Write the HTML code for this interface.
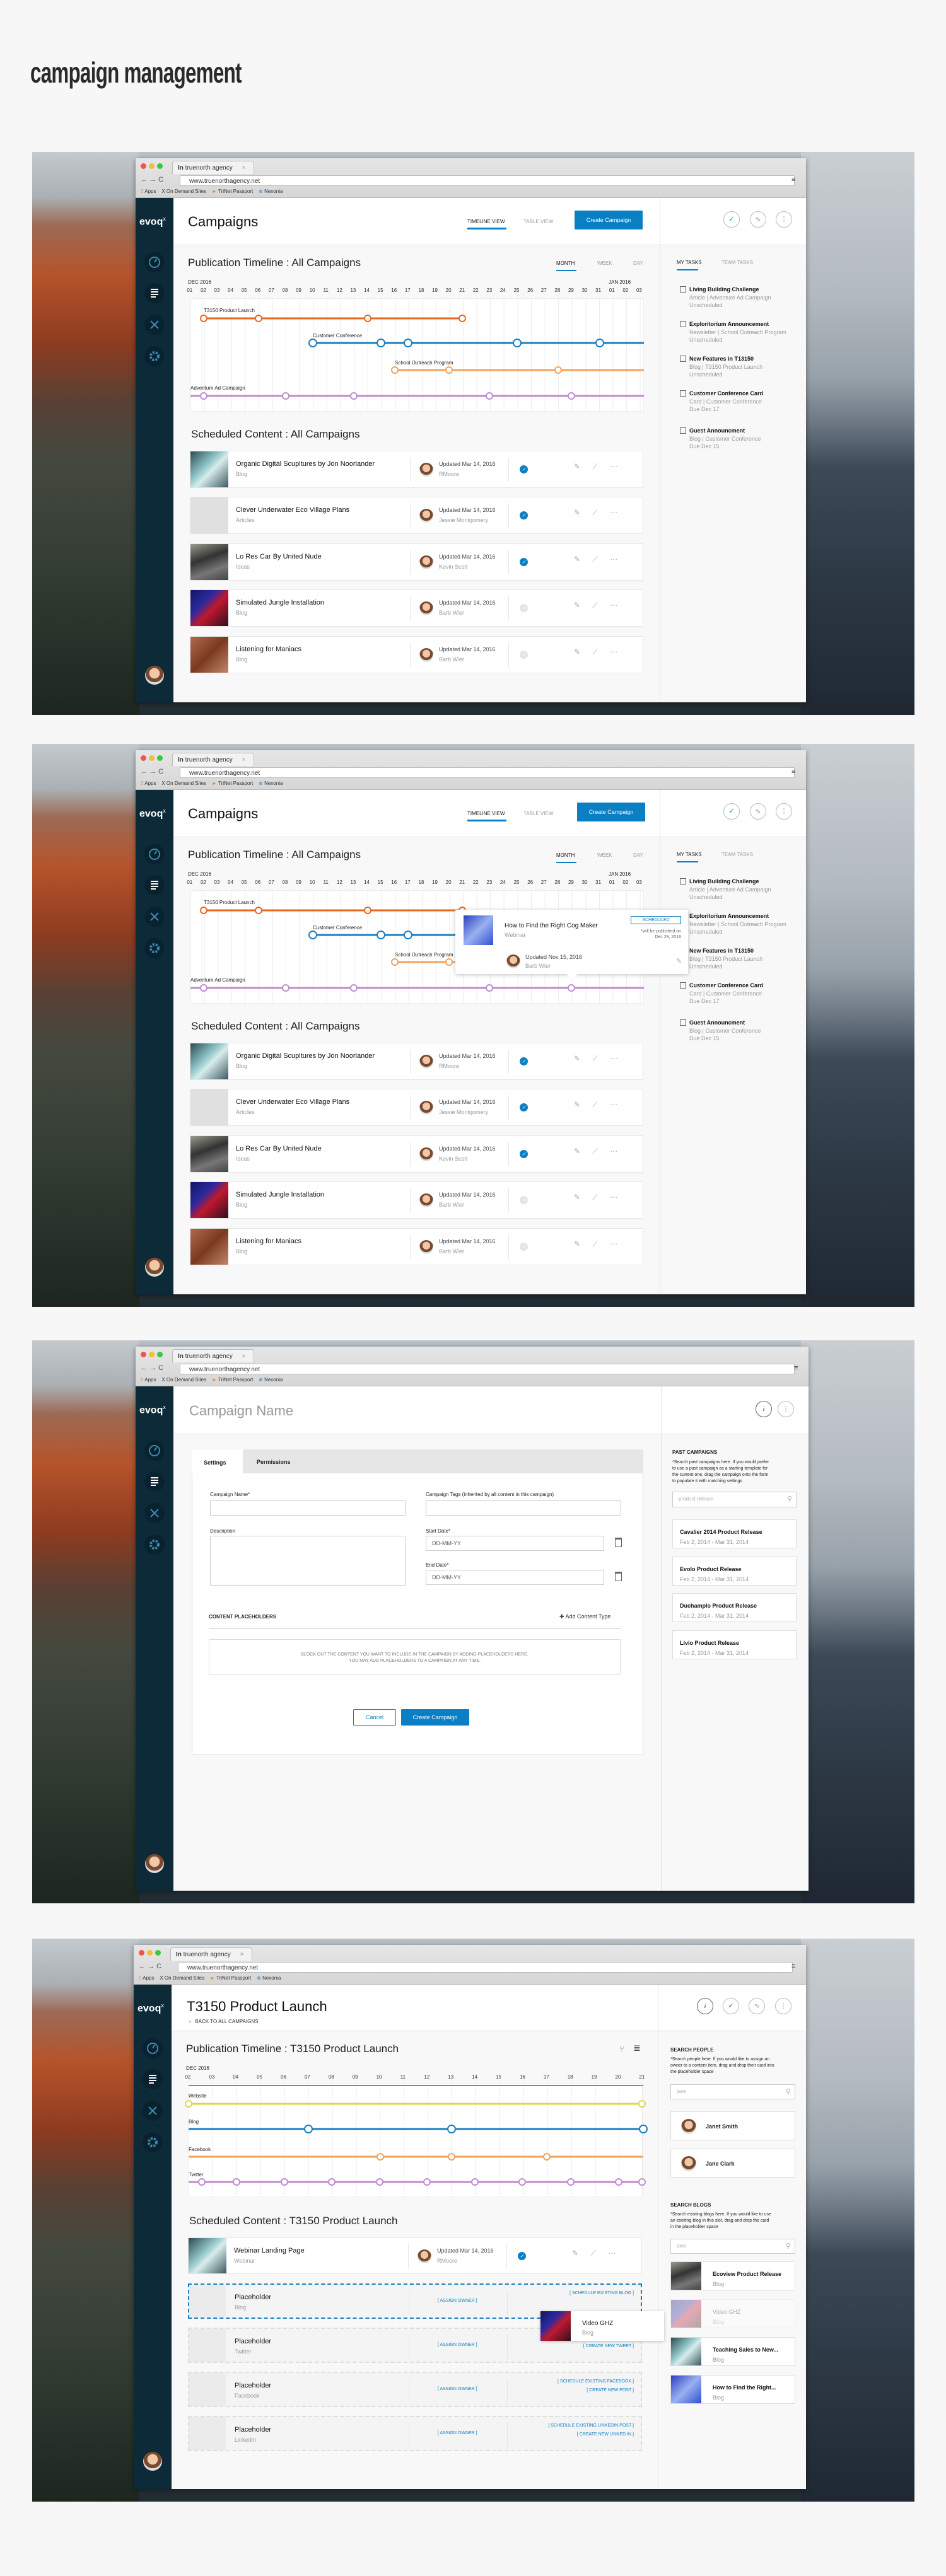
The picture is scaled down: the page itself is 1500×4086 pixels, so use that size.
<!DOCTYPE html>
<html><head><meta charset="utf-8"><style>
*{margin:0;padding:0;box-sizing:border-box}
body{width:1500px;height:4086px;background:#f7f7f7;font-family:"Liberation Sans",sans-serif;color:#222;position:relative;overflow:hidden}
.a{position:absolute}
.h1{position:absolute;left:48px;top:88px;font-size:46px;font-weight:bold;color:#2a2a2a;transform:scaleX(.68);transform-origin:left top;letter-spacing:-1px;white-space:nowrap}
.panel{position:absolute;left:51px;width:1399px;height:893px;overflow:hidden;background:linear-gradient(#b9c0c6,#8d98a1 40%,#3e4a52 60%,#222c33)}
.bgl{position:absolute;left:0;top:0;width:170px;height:100%;background:linear-gradient(#c4c9cd 0%,#aab0b4 8%,#9d6a55 13%,#b5532a 22%,#8e3b20 34%,#5a4034 44%,#44493f 55%,#333c33 75%,#1d261f 100%)}
.bgr{position:absolute;right:0;top:0;width:180px;height:100%;background:linear-gradient(#c9ced2 0%,#b3bac0 25%,#98a2aa 40%,#6d7884 48%,#3d4957 56%,#2d3945 75%,#1f2832 100%)}
.br{position:absolute;left:164px;top:10px;width:1063px;height:863px;background:#f8f8f8;box-shadow:0 2px 8px rgba(0,0,0,.4)}
.chrome{position:absolute;left:0;top:0;width:1063px;height:63px;background:linear-gradient(#e6e6e6,#d6d6d6);border-bottom:1px solid #b8b8b8;font-size:9px;color:#333}
.tl{position:absolute;top:8px;width:9px;height:9px;border-radius:50%}
.tab{position:absolute;left:58px;top:4px;width:130px;height:21px;background:#f2f2f2;border:1px solid #bbb;border-bottom:none;border-radius:4px 4px 0 0;padding:5px 0 0 8px;font-size:10px}
.addr{position:absolute;left:70px;top:27px;width:975px;height:17px;background:#fff;border:1px solid #bbb;border-radius:2px;padding:3px 0 0 14px;font-size:10px}
.bm{position:absolute;top:48px;font-size:8px;color:#333}
.app{position:absolute;left:0;top:63px;width:1063px;height:800px;background:#f8f8f8;overflow:hidden}
.sb{position:absolute;left:0;top:0;width:60px;height:800px;background:#0c2a38}
.logo{position:absolute;left:6px;top:28px;color:#fff;font-weight:bold;font-size:16px}
.logo sup{font-size:9px;font-weight:normal}
.si{position:absolute;left:14px;width:32px;height:32px;border-radius:50%;background:#0a2230}
.av{position:absolute;border-radius:50%;background:radial-gradient(circle at 50% 40%,#f0c8a8 0 35%,#7a4a30 36% 60%,#ddd 61%)}
.hdr{position:absolute;left:60px;top:0;width:771px;height:75px;background:#fff;border-bottom:1px solid #e2e2e2}
.rhdr{position:absolute;left:831px;top:0;width:232px;height:75px;background:#fff;border-bottom:1px solid #e2e2e2;border-left:1px solid #e2e2e2}
.rp{position:absolute;left:831px;top:75px;width:232px;height:725px;border-left:1px solid #e2e2e2;background:#f8f8f8}
.t{position:absolute;white-space:nowrap}
.btn{position:absolute;background:#0a7fc4;color:#fff;font-size:9px;text-align:center;border-radius:1px}
.circ{position:absolute;width:26px;height:26px;border-radius:50%;border:1px solid #bbb;background:#fff;color:#999;font-size:11px;text-align:center;line-height:24px}
.days{position:absolute;display:flex;font-size:8px;color:#333}
.days span{text-align:center;flex:none}
.chart{position:absolute;background-color:#fff;border:1px solid #eee}
.row{position:absolute;height:59px;background:#fff;border:1px solid #e6e6e6}
.th{position:absolute;left:0;top:0;width:60px;height:100%}
.rt{position:absolute;left:72px;top:14px;font-size:11px;color:#111;white-space:nowrap}
.rs{position:absolute;left:72px;top:31px;font-size:9px;color:#999;white-space:nowrap}
.d1{position:absolute;top:10px;width:1px;height:38px;background:#e6e6e6}
.up{position:absolute;left:394px;top:15px;font-size:9px;color:#444;white-space:nowrap}
.us{position:absolute;left:394px;top:31px;font-size:9px;color:#999;white-space:nowrap}
.ck{position:absolute;left:522px;top:22px;width:13px;height:13px;border-radius:50%;background:#0a7fc4;color:#fff;font-size:8px;line-height:13px;text-align:center}
.ck.g{background:#e4e4e4;color:#fff}
.ico{position:absolute;left:608px;top:17px;font-size:12px;color:#aaa;word-spacing:16px;white-space:nowrap}
.task{position:absolute;left:863px;font-size:9px;white-space:nowrap}
.task b{display:block;font-weight:bold;color:#111;padding-left:15px;margin-bottom:3px}
.task i{display:block;font-style:normal;color:#999;padding-left:15px;margin-bottom:2px}
.task:before{content:"";position:absolute;left:0;top:0;width:8px;height:8px;border:1px solid #666}
.lbl{position:absolute;font-size:8px;color:#222;white-space:nowrap}
.inp{position:absolute;background:#fff;border:1px solid #ccc;font-size:9px;color:#555;padding:6px 0 0 9px}
.card{position:absolute;background:#fff;border:1px solid #ddd}
.card b{position:absolute;left:11px;top:14px;font-size:9px;font-weight:bold;color:#111;white-space:nowrap}
.card i{position:absolute;left:11px;top:30px;font-size:9px;font-style:normal;color:#999;white-space:nowrap}
.ph{position:absolute;height:56px;border:2px dashed #ddd;background:#f4f4f4}
.lnk{position:absolute;font-size:7px;color:#0a7fc4;white-space:nowrap}
</style></head><body>

<div class="h1">campaign management</div>

<!-- ================= PANEL 1 ================= -->
<div class="panel" style="top:241px"><div class="bgl"></div><div class="bgr"></div>
<div class="br">
 <div class="chrome"><i class="tl" style="left:8px;background:#f0544c"></i><i class="tl" style="left:21px;background:#f6bd2f"></i><i class="tl" style="left:34px;background:#3fc53f"></i>
  <div class="tab"><b>In</b> truenorth agency <span style="color:#999;margin-left:12px">×</span></div>
  <div class="a" style="left:8px;top:28px;font-size:11px;color:#555">← → C</div>
  <div class="addr">www.truenorthagency.net</div>
  <div class="a" style="left:1040px;top:28px;font-size:11px;color:#444">≡</div>
  <div class="bm" style="left:8px"><span style="color:#e44">⁞⁞</span> Apps &nbsp;&nbsp; <span style="color:#235">X</span> On Demand Sites &nbsp;&nbsp; <span style="color:#f80">►</span> TriNet Passport &nbsp;&nbsp; <span style="color:#38c">⊗</span> Nexonia</div>
 </div>
 <div class="app">
  <div class="sb"><div class="logo">evoq<sup>x</sup></div>
   <div class="si" style="top:86px"><svg width="32" height="32"><circle cx="16" cy="16" r="8" fill="none" stroke="#3a8bb0" stroke-width="2"/><path d="M16 16l3-5" stroke="#3a8bb0" stroke-width="2"/></svg></div>
   <div class="si" style="top:135px"><svg width="32" height="32"><path d="M10 10h12M10 14h12M10 18h12M10 22h8" stroke="#fff" stroke-width="2"/></svg></div>
   <div class="si" style="top:185px"><svg width="32" height="32"><path d="M10 10l12 12M22 10l-12 12" stroke="#3a8bb0" stroke-width="2"/></svg></div>
   <div class="si" style="top:235px"><svg width="32" height="32"><circle cx="16" cy="16" r="6" fill="none" stroke="#3a8bb0" stroke-width="4" stroke-dasharray="3 2"/></svg></div>
   <div class="av" style="left:15px;top:742px;width:30px;height:30px"></div>
  </div>
  <div class="hdr"></div><div class="rhdr"></div><div class="rp"></div>
  <div class="t" style="left:83px;top:25px;font-size:22px;color:#111">Campaigns</div>
  <div class="t" style="left:526px;top:33px;font-size:8px;color:#111">TIMELINE VIEW</div>
  <div class="a" style="left:526px;top:47px;width:62px;height:3px;background:#0a7fc4"></div>
  <div class="t" style="left:615px;top:33px;font-size:8px;color:#999">TABLE VIEW</div>
  <div class="btn" style="left:696px;top:20px;width:108px;height:30px;line-height:30px">Create  Campaign</div>
  <div class="circ" style="left:932px;top:21px;color:#0a7fc4">✓</div>
  <div class="circ" style="left:974px;top:21px">∿</div>
  <div class="circ" style="left:1015px;top:21px">⋮</div>

  <div class="t" style="left:83px;top:93px;font-size:17px;color:#222">Publication Timeline : All Campaigns</div>
  <div class="t" style="left:667px;top:99px;font-size:8px;color:#111">MONTH</div>
  <div class="a" style="left:667px;top:114px;width:32px;height:2px;background:#0a7fc4"></div>
  <div class="t" style="left:732px;top:99px;font-size:8px;color:#999">WEEK</div>
  <div class="t" style="left:789px;top:99px;font-size:8px;color:#999">DAY</div>
  <div class="t" style="left:83px;top:129px;font-size:8px">DEC 2016</div>
  <div class="t" style="left:750px;top:129px;font-size:8px">JAN 2016</div>
  <div class="days" style="left:75px;top:142px"><span style="width:21.6px">01</span><span style="width:21.6px">02</span><span style="width:21.6px">03</span><span style="width:21.6px">04</span><span style="width:21.6px">05</span><span style="width:21.6px">06</span><span style="width:21.6px">07</span><span style="width:21.6px">08</span><span style="width:21.6px">09</span><span style="width:21.6px">10</span><span style="width:21.6px">11</span><span style="width:21.6px">12</span><span style="width:21.6px">13</span><span style="width:21.6px">14</span><span style="width:21.6px">15</span><span style="width:21.6px">16</span><span style="width:21.6px">17</span><span style="width:21.6px">18</span><span style="width:21.6px">19</span><span style="width:21.6px">20</span><span style="width:21.6px">21</span><span style="width:21.6px">22</span><span style="width:21.6px">23</span><span style="width:21.6px">24</span><span style="width:21.6px">25</span><span style="width:21.6px">26</span><span style="width:21.6px">27</span><span style="width:21.6px">28</span><span style="width:21.6px">29</span><span style="width:21.6px">30</span><span style="width:21.6px">31</span><span style="width:21.6px">01</span><span style="width:21.6px">02</span><span style="width:21.6px">03</span></div>
  <div class="chart" style="left:87px;top:159px;width:719px;height:180px;background-image:repeating-linear-gradient(to right,#ececec 0 1px,transparent 1px 21.6px);background-position:20.6px 0"></div>
  <svg class="a" style="left:0;top:0" width="1063" height="360" fill="#fff" stroke-width="2">
   <g stroke="#e8671c"><line x1="108" y1="191" x2="518" y2="191" stroke-width="3"/><circle cx="108" cy="191" r="5"/><circle cx="195" cy="191" r="5"/><circle cx="368" cy="191" r="5"/><circle cx="518" cy="191" r="5"/></g>
   <g stroke="#1a7fc1"><line x1="281" y1="230" x2="806" y2="230" stroke-width="3"/><circle cx="281" cy="230" r="6"/><circle cx="389" cy="230" r="6"/><circle cx="432" cy="230" r="6"/><circle cx="605" cy="230" r="6"/><circle cx="736" cy="230" r="6"/></g>
   <g stroke="#f5a05a"><line x1="411" y1="273" x2="806" y2="273" stroke-width="3"/><circle cx="411" cy="273" r="5"/><circle cx="497" cy="273" r="5"/><circle cx="670" cy="273" r="5"/></g>
   <g stroke="#c08ad0"><line x1="87" y1="314" x2="806" y2="314" stroke-width="3"/><circle cx="108" cy="314" r="5"/><circle cx="238" cy="314" r="5"/><circle cx="346" cy="314" r="5"/><circle cx="561" cy="314" r="5"/><circle cx="691" cy="314" r="5"/></g>
  </svg>
  <div class="lbl" style="left:108px;top:174px">T3150 Product Launch</div>
  <div class="lbl" style="left:281px;top:214px">Customer Conference</div>
  <div class="lbl" style="left:411px;top:257px">School Outreach Program</div>
  <div class="lbl" style="left:87px;top:297px">Adventure Ad Campaign</div>

  <div class="t" style="left:88px;top:365px;font-size:17px;color:#222">Scheduled Content : All Campaigns</div>
  <div class="row" style="left:86px;top:401px;width:719px"><div class="th" style="background:linear-gradient(135deg,#2e4a50,#8fc4c8 40%,#d8ecec 55%,#3a5a5e)"></div><div class="rt">Organic Digital Scupltures by Jon Noorlander</div><div class="rs">Blog</div><i class="d1" style="left:348px"></i><i class="av" style="left:363px;top:18px;width:22px;height:22px"></i><div class="up">Updated Mar 14, 2016</div><div class="us">RMoore</div><i class="d1" style="left:504px"></i><i class="ck">✓</i><span class="ico">✎ ⟋ ⋯</span></div>
  <div class="row" style="left:86px;top:474px;width:719px"><div class="th" style="background:#e0e0e0"></div><div class="rt">Clever Underwater Eco Village Plans</div><div class="rs">Articles</div><i class="d1" style="left:348px"></i><i class="av" style="left:363px;top:18px;width:22px;height:22px"></i><div class="up">Updated Mar 14, 2016</div><div class="us">Jessie Montgomery</div><i class="d1" style="left:504px"></i><i class="ck">✓</i><span class="ico">✎ ⟋ ⋯</span></div>
  <div class="row" style="left:86px;top:548px;width:719px"><div class="th" style="background:linear-gradient(160deg,#9a9a90,#333 40%,#777 70%,#444)"></div><div class="rt">Lo Res Car By United Nude</div><div class="rs">Ideas</div><i class="d1" style="left:348px"></i><i class="av" style="left:363px;top:18px;width:22px;height:22px"></i><div class="up">Updated Mar 14, 2016</div><div class="us">Kevin Scott</div><i class="d1" style="left:504px"></i><i class="ck">✓</i><span class="ico">✎ ⟋ ⋯</span></div>
  <div class="row" style="left:86px;top:621px;width:719px"><div class="th" style="background:linear-gradient(135deg,#151560,#2a2aa0 35%,#c01830 55%,#301020)"></div><div class="rt">Simulated Jungle Installation</div><div class="rs">Blog</div><i class="d1" style="left:348px"></i><i class="av" style="left:363px;top:18px;width:22px;height:22px"></i><div class="up">Updated Mar 14, 2016</div><div class="us">Barb Wier</div><i class="d1" style="left:504px"></i><i class="ck g">✓</i><span class="ico">✎ ⟋ ⋯</span></div>
  <div class="row" style="left:86px;top:695px;width:719px"><div class="th" style="background:linear-gradient(135deg,#b06a48,#7a3a22 50%,#c08868)"></div><div class="rt">Listening for Maniacs</div><div class="rs">Blog</div><i class="d1" style="left:348px"></i><i class="av" style="left:363px;top:18px;width:22px;height:22px"></i><div class="up">Updated Mar 14, 2016</div><div class="us">Barb Wier</div><i class="d1" style="left:504px"></i><i class="ck g">✓</i><span class="ico">✎ ⟋ ⋯</span></div>

  <div class="t" style="left:858px;top:98px;font-size:8px;color:#111">MY TASKS</div>
  <div class="a" style="left:858px;top:113px;width:34px;height:2px;background:#0a7fc4"></div>
  <div class="t" style="left:929px;top:98px;font-size:8px;color:#999">TEAM TASKS</div>
  <div class="task" style="top:140px"><b>Living Building Challenge</b><i>Article | Adventure Ad Campaign</i><i>Unscheduled</i></div>
  <div class="task" style="top:195px"><b>Exploritorium Announcement</b><i>Newsletter | School Outreach Program</i><i>Unscheduled</i></div>
  <div class="task" style="top:250px"><b>New Features in T13150</b><i>Blog | T3150 Product Launch</i><i>Unscheduled</i></div>
  <div class="task" style="top:305px"><b>Customer Conference Card</b><i>Card | Customer Conference</i><i>Due Dec 17</i></div>
  <div class="task" style="top:364px"><b>Guest Announcment</b><i>Blog | Customer Conference</i><i>Due Dec 15</i></div>
 </div>
</div></div>

<!-- ================= PANEL 2 ================= -->
<div class="panel" style="top:1180px"><div class="bgl"></div><div class="bgr"></div>
<div class="br">
 <div class="chrome"><i class="tl" style="left:8px;background:#f0544c"></i><i class="tl" style="left:21px;background:#f6bd2f"></i><i class="tl" style="left:34px;background:#3fc53f"></i>
  <div class="tab"><b>In</b> truenorth agency <span style="color:#999;margin-left:12px">×</span></div>
  <div class="a" style="left:8px;top:28px;font-size:11px;color:#555">← → C</div>
  <div class="addr">www.truenorthagency.net</div>
  <div class="a" style="left:1040px;top:28px;font-size:11px;color:#444">≡</div>
  <div class="bm" style="left:8px"><span style="color:#e44">⁞⁞</span> Apps &nbsp;&nbsp; <span style="color:#235">X</span> On Demand Sites &nbsp;&nbsp; <span style="color:#f80">►</span> TriNet Passport &nbsp;&nbsp; <span style="color:#38c">⊗</span> Nexonia</div>
 </div>
 <div class="app">
  <div class="sb"><div class="logo">evoq<sup>x</sup></div>
   <div class="si" style="top:86px"><svg width="32" height="32"><circle cx="16" cy="16" r="8" fill="none" stroke="#3a8bb0" stroke-width="2"/><path d="M16 16l3-5" stroke="#3a8bb0" stroke-width="2"/></svg></div>
   <div class="si" style="top:135px"><svg width="32" height="32"><path d="M10 10h12M10 14h12M10 18h12M10 22h8" stroke="#fff" stroke-width="2"/></svg></div>
   <div class="si" style="top:185px"><svg width="32" height="32"><path d="M10 10l12 12M22 10l-12 12" stroke="#3a8bb0" stroke-width="2"/></svg></div>
   <div class="si" style="top:235px"><svg width="32" height="32"><circle cx="16" cy="16" r="6" fill="none" stroke="#3a8bb0" stroke-width="4" stroke-dasharray="3 2"/></svg></div>
   <div class="av" style="left:15px;top:742px;width:30px;height:30px"></div>
  </div>
  <div class="hdr"></div><div class="rhdr"></div><div class="rp"></div>
  <div class="t" style="left:83px;top:25px;font-size:22px;color:#111">Campaigns</div>
  <div class="t" style="left:526px;top:33px;font-size:8px;color:#111">TIMELINE VIEW</div>
  <div class="a" style="left:526px;top:47px;width:62px;height:3px;background:#0a7fc4"></div>
  <div class="t" style="left:615px;top:33px;font-size:8px;color:#999">TABLE VIEW</div>
  <div class="btn" style="left:700px;top:20px;width:108px;height:30px;line-height:30px">Create  Campaign</div>
  <div class="circ" style="left:932px;top:21px;color:#0a7fc4">✓</div>
  <div class="circ" style="left:974px;top:21px">∿</div>
  <div class="circ" style="left:1015px;top:21px">⋮</div>

  <div class="t" style="left:83px;top:93px;font-size:17px;color:#222">Publication Timeline : All Campaigns</div>
  <div class="t" style="left:667px;top:99px;font-size:8px;color:#111">MONTH</div>
  <div class="a" style="left:667px;top:114px;width:32px;height:2px;background:#0a7fc4"></div>
  <div class="t" style="left:732px;top:99px;font-size:8px;color:#999">WEEK</div>
  <div class="t" style="left:789px;top:99px;font-size:8px;color:#999">DAY</div>
  <div class="t" style="left:83px;top:129px;font-size:8px">DEC 2016</div>
  <div class="t" style="left:750px;top:129px;font-size:8px">JAN 2016</div>
  <div class="days" style="left:75px;top:142px"><span style="width:21.6px">01</span><span style="width:21.6px">02</span><span style="width:21.6px">03</span><span style="width:21.6px">04</span><span style="width:21.6px">05</span><span style="width:21.6px">06</span><span style="width:21.6px">07</span><span style="width:21.6px">08</span><span style="width:21.6px">09</span><span style="width:21.6px">10</span><span style="width:21.6px">11</span><span style="width:21.6px">12</span><span style="width:21.6px">13</span><span style="width:21.6px">14</span><span style="width:21.6px">15</span><span style="width:21.6px">16</span><span style="width:21.6px">17</span><span style="width:21.6px">18</span><span style="width:21.6px">19</span><span style="width:21.6px">20</span><span style="width:21.6px">21</span><span style="width:21.6px">22</span><span style="width:21.6px">23</span><span style="width:21.6px">24</span><span style="width:21.6px">25</span><span style="width:21.6px">26</span><span style="width:21.6px">27</span><span style="width:21.6px">28</span><span style="width:21.6px">29</span><span style="width:21.6px">30</span><span style="width:21.6px">31</span><span style="width:21.6px">01</span><span style="width:21.6px">02</span><span style="width:21.6px">03</span></div>
  <div class="chart" style="left:87px;top:159px;width:719px;height:180px;background-image:repeating-linear-gradient(to right,#ececec 0 1px,transparent 1px 21.6px);background-position:20.6px 0"></div>
  <svg class="a" style="left:0;top:0" width="1063" height="360" fill="#fff" stroke-width="2">
   <g stroke="#e8671c"><line x1="108" y1="191" x2="518" y2="191" stroke-width="3"/><circle cx="108" cy="191" r="5"/><circle cx="195" cy="191" r="5"/><circle cx="368" cy="191" r="5"/><circle cx="518" cy="191" r="5"/></g>
   <g stroke="#1a7fc1"><line x1="281" y1="230" x2="806" y2="230" stroke-width="3"/><circle cx="281" cy="230" r="6"/><circle cx="389" cy="230" r="6"/><circle cx="432" cy="230" r="6"/><circle cx="605" cy="230" r="6"/><circle cx="736" cy="230" r="6"/></g>
   <g stroke="#f5a05a"><line x1="411" y1="273" x2="806" y2="273" stroke-width="3"/><circle cx="411" cy="273" r="5"/><circle cx="497" cy="273" r="5"/><circle cx="670" cy="273" r="5"/></g>
   <g stroke="#c08ad0"><line x1="87" y1="314" x2="806" y2="314" stroke-width="3"/><circle cx="108" cy="314" r="5"/><circle cx="238" cy="314" r="5"/><circle cx="346" cy="314" r="5"/><circle cx="561" cy="314" r="5"/><circle cx="691" cy="314" r="5"/></g>
  </svg>
  <div class="lbl" style="left:108px;top:174px">T3150 Product Launch</div>
  <div class="lbl" style="left:281px;top:214px">Customer Conference</div>
  <div class="lbl" style="left:411px;top:257px">School Outreach Program</div>
  <div class="lbl" style="left:87px;top:297px">Adventure Ad Campaign</div>

  <div class="t" style="left:88px;top:365px;font-size:17px;color:#222">Scheduled Content : All Campaigns</div>
  <div class="row" style="left:86px;top:401px;width:719px"><div class="th" style="background:linear-gradient(135deg,#2e4a50,#8fc4c8 40%,#d8ecec 55%,#3a5a5e)"></div><div class="rt">Organic Digital Scupltures by Jon Noorlander</div><div class="rs">Blog</div><i class="d1" style="left:348px"></i><i class="av" style="left:363px;top:18px;width:22px;height:22px"></i><div class="up">Updated Mar 14, 2016</div><div class="us">RMoore</div><i class="d1" style="left:504px"></i><i class="ck">✓</i><span class="ico">✎ ⟋ ⋯</span></div>
  <div class="row" style="left:86px;top:474px;width:719px"><div class="th" style="background:#e0e0e0"></div><div class="rt">Clever Underwater Eco Village Plans</div><div class="rs">Articles</div><i class="d1" style="left:348px"></i><i class="av" style="left:363px;top:18px;width:22px;height:22px"></i><div class="up">Updated Mar 14, 2016</div><div class="us">Jessie Montgomery</div><i class="d1" style="left:504px"></i><i class="ck">✓</i><span class="ico">✎ ⟋ ⋯</span></div>
  <div class="row" style="left:86px;top:548px;width:719px"><div class="th" style="background:linear-gradient(160deg,#9a9a90,#333 40%,#777 70%,#444)"></div><div class="rt">Lo Res Car By United Nude</div><div class="rs">Ideas</div><i class="d1" style="left:348px"></i><i class="av" style="left:363px;top:18px;width:22px;height:22px"></i><div class="up">Updated Mar 14, 2016</div><div class="us">Kevin Scott</div><i class="d1" style="left:504px"></i><i class="ck">✓</i><span class="ico">✎ ⟋ ⋯</span></div>
  <div class="row" style="left:86px;top:621px;width:719px"><div class="th" style="background:linear-gradient(135deg,#151560,#2a2aa0 35%,#c01830 55%,#301020)"></div><div class="rt">Simulated Jungle Installation</div><div class="rs">Blog</div><i class="d1" style="left:348px"></i><i class="av" style="left:363px;top:18px;width:22px;height:22px"></i><div class="up">Updated Mar 14, 2016</div><div class="us">Barb Wier</div><i class="d1" style="left:504px"></i><i class="ck g">✓</i><span class="ico">✎ ⟋ ⋯</span></div>
  <div class="row" style="left:86px;top:695px;width:719px"><div class="th" style="background:linear-gradient(135deg,#b06a48,#7a3a22 50%,#c08868)"></div><div class="rt">Listening for Maniacs</div><div class="rs">Blog</div><i class="d1" style="left:348px"></i><i class="av" style="left:363px;top:18px;width:22px;height:22px"></i><div class="up">Updated Mar 14, 2016</div><div class="us">Barb Wier</div><i class="d1" style="left:504px"></i><i class="ck g">✓</i><span class="ico">✎ ⟋ ⋯</span></div>

  <div class="t" style="left:858px;top:98px;font-size:8px;color:#111">MY TASKS</div>
  <div class="a" style="left:858px;top:113px;width:34px;height:2px;background:#0a7fc4"></div>
  <div class="t" style="left:929px;top:98px;font-size:8px;color:#999">TEAM TASKS</div>
  <div class="task" style="top:140px"><b>Living Building Challenge</b><i>Article | Adventure Ad Campaign</i><i>Unscheduled</i></div>
  <div class="task" style="top:195px"><b>Exploritorium Announcement</b><i>Newsletter | School Outreach Program</i><i>Unscheduled</i></div>
  <div class="task" style="top:250px"><b>New Features in T13150</b><i>Blog | T3150 Product Launch</i><i>Unscheduled</i></div>
  <div class="task" style="top:305px"><b>Customer Conference Card</b><i>Card | Customer Conference</i><i>Due Dec 17</i></div>
  <div class="task" style="top:364px"><b>Guest Announcment</b><i>Blog | Customer Conference</i><i>Due Dec 15</i></div>

  <!-- popover -->
  <div class="a" style="left:507px;top:190px;width:369px;height:102px;background:#fff;box-shadow:0 1px 6px rgba(0,0,0,.25)">
   <div class="a" style="left:13px;top:9px;width:47px;height:47px;background:linear-gradient(135deg,#2a40c0,#9ab0f0 50%,#3050d0)"></div>
   <div class="t" style="left:78px;top:20px;font-size:10px;color:#111">How to Find the Right Cog Maker</div>
   <div class="t" style="left:78px;top:35px;font-size:9px;color:#999">Webinar</div>
   <div class="a" style="left:278px;top:10px;width:80px;height:13px;border:1px solid #0a7fc4;color:#0a7fc4;font-size:7px;text-align:center;line-height:11px">SCHEDULED</div>
   <div class="t" style="right:11px;top:30px;font-size:7px;color:#666;text-align:right;line-height:9px">*will be published on<br>Dec 29, 2016</div>
   <i class="av" style="left:81px;top:71px;width:22px;height:22px"></i>
   <div class="t" style="left:111px;top:70px;font-size:9px;color:#444">Updated Nov 15, 2016</div>
   <div class="t" style="left:111px;top:84px;font-size:9px;color:#999">Barb Wier</div>
   <div class="t" style="left:350px;top:75px;font-size:11px;color:#aaa">✎</div>
  </div>
  <div class="a" style="left:686px;top:286px;width:12px;height:12px;background:#fff;transform:rotate(45deg)"></div>
 </div>
</div></div>

<!-- ================= PANEL 3 ================= -->
<div class="panel" style="top:2126px"><div class="bgl"></div><div class="bgr"></div>
<div class="br" style="width:1067px">
 <div class="chrome" style="width:1067px"><i class="tl" style="left:8px;background:#f0544c"></i><i class="tl" style="left:21px;background:#f6bd2f"></i><i class="tl" style="left:34px;background:#3fc53f"></i>
  <div class="tab"><b>In</b> truenorth agency <span style="color:#999;margin-left:12px">×</span></div>
  <div class="a" style="left:8px;top:28px;font-size:11px;color:#555">← → C</div>
  <div class="addr">www.truenorthagency.net</div>
  <div class="a" style="left:1044px;top:28px;font-size:11px;color:#444">≡</div>
  <div class="bm" style="left:8px"><span style="color:#e44">⁞⁞</span> Apps &nbsp;&nbsp; <span style="color:#235">X</span> On Demand Sites &nbsp;&nbsp; <span style="color:#f80">►</span> TriNet Passport &nbsp;&nbsp; <span style="color:#38c">⊗</span> Nexonia</div>
 </div>
 <div class="app" style="width:1067px">
  <div class="sb"><div class="logo">evoq<sup>x</sup></div>
   <div class="si" style="top:86px"><svg width="32" height="32"><circle cx="16" cy="16" r="8" fill="none" stroke="#3a8bb0" stroke-width="2"/><path d="M16 16l3-5" stroke="#3a8bb0" stroke-width="2"/></svg></div>
   <div class="si" style="top:135px"><svg width="32" height="32"><path d="M10 10h12M10 14h12M10 18h12M10 22h8" stroke="#fff" stroke-width="2"/></svg></div>
   <div class="si" style="top:185px"><svg width="32" height="32"><path d="M10 10l12 12M22 10l-12 12" stroke="#3a8bb0" stroke-width="2"/></svg></div>
   <div class="si" style="top:235px"><svg width="32" height="32"><circle cx="16" cy="16" r="6" fill="none" stroke="#3a8bb0" stroke-width="4" stroke-dasharray="3 2"/></svg></div>
   <div class="av" style="left:15px;top:742px;width:30px;height:30px"></div>
  </div>
  <div class="hdr" style="height:76px;width:773px"></div><div class="rhdr" style="left:833px;width:234px;height:76px"></div><div class="rp" style="left:833px;top:76px;width:234px"></div>
  <div class="t" style="left:85px;top:26px;font-size:22px;color:#999">Campaign Name</div>
  <div class="circ" style="left:983px;top:23px;color:#444;border-color:#666;font-family:'Liberation Serif',serif;font-style:italic">i</div>
  <div class="circ" style="left:1018px;top:23px">⋮</div>

  <div class="a" style="left:89px;top:100px;width:716px;height:485px;background:#fff;border:1px solid #ddd"></div>
  <div class="a" style="left:89px;top:100px;width:716px;height:38px;background:#e6e6e6"></div>
  <div class="a" style="left:89px;top:100px;width:81px;height:38px;background:#fff"></div>
  <div class="t" style="left:108px;top:116px;font-size:9px;font-weight:bold">Settings</div>
  <div class="t" style="left:192px;top:115px;font-size:9px;font-weight:bold">Permissions</div>
  <div class="lbl" style="left:118px;top:167px">Campaign Name*</div>
  <div class="inp" style="left:118px;top:181px;width:310px;height:24px"></div>
  <div class="lbl" style="left:460px;top:167px">Campaign Tags (inherited by all content in this campaign)</div>
  <div class="inp" style="left:460px;top:181px;width:310px;height:24px"></div>
  <div class="lbl" style="left:118px;top:225px">Description</div>
  <div class="inp" style="left:118px;top:237px;width:310px;height:79px"></div>
  <div class="lbl" style="left:460px;top:225px">Start Date*</div>
  <div class="inp" style="left:460px;top:237px;width:283px;height:24px">DD-MM-YY</div>
  <div class="a" style="left:760px;top:240px;width:11px;height:15px;border:1px solid #666;border-top-width:3px"></div>
  <div class="lbl" style="left:460px;top:279px">End Date*</div>
  <div class="inp" style="left:460px;top:291px;width:283px;height:24px">DD-MM-YY</div>
  <div class="a" style="left:760px;top:294px;width:11px;height:15px;border:1px solid #666;border-top-width:3px"></div>
  <div class="t" style="left:116px;top:361px;font-size:8px;font-weight:bold">CONTENT PLACEHOLDERS</div>
  <div class="t" style="left:672px;top:360px;font-size:9px;color:#333">✚ Add Content Type</div>
  <div class="a" style="left:116px;top:383px;width:654px;height:2px;background:#e2e2e2"></div>
  <div class="a" style="left:116px;top:401px;width:653px;height:57px;border:1px solid #ddd"></div>
  <div class="t" style="left:116px;top:421px;width:653px;text-align:center;font-size:7px;color:#777;line-height:10px">BLOCK OUT THE CONTENT YOU WANT TO INCLUDE IN THE CAMPAIGN BY ADDING PLACEHOLDERS HERE.<br>YOU MAY ADD PLACEHOLDERS TO A CAMPAIGN AT ANY TIME.</div>
  <div class="a" style="left:345px;top:512px;width:68px;height:26px;border:1px solid #0a7fc4;color:#0a7fc4;font-size:9px;text-align:center;line-height:24px;border-radius:2px">Cancel</div>
  <div class="btn" style="left:421px;top:512px;width:108px;height:26px;line-height:26px">Create Campaign</div>

  <div class="t" style="left:851px;top:100px;font-size:8px;font-weight:bold">PAST CAMPAIGNS</div>
  <div class="t" style="left:851px;top:116px;font-size:7px;line-height:10px;color:#222">*Search past campaigns here.  If you would prefer<br>to use a past campaign as a starting template for<br>the current one, drag the campaign onto the form<br>to populate it with matching settings</div>
  <div class="inp" style="left:851px;top:167px;width:197px;height:25px;color:#aaa;font-size:8px">product release<span style="position:absolute;right:6px;top:4px;font-size:11px">⚲</span></div>
  <div class="card" style="left:851px;top:211px;width:197px;height:46px"><b>Cavalier 2014 Product Release</b><i>Feb 2, 2014 - Mar 31, 2014</i></div>
  <div class="card" style="left:851px;top:270px;width:197px;height:46px"><b>Evolo Product Release</b><i>Feb 2, 2014 - Mar 31, 2014</i></div>
  <div class="card" style="left:851px;top:328px;width:197px;height:46px"><b>Duchamplo Product Release</b><i>Feb 2, 2014 - Mar 31, 2014</i></div>
  <div class="card" style="left:851px;top:387px;width:197px;height:46px"><b>Livio Product Release</b><i>Feb 2, 2014 - Mar 31, 2014</i></div>
 </div>
</div></div>

<!-- ================= PANEL 4 ================= -->
<div class="panel" style="top:3075px"><div class="bgl"></div><div class="bgr"></div>
<div class="br" style="left:161px;width:1066px">
 <div class="chrome" style="width:1066px"><i class="tl" style="left:8px;background:#f0544c"></i><i class="tl" style="left:21px;background:#f6bd2f"></i><i class="tl" style="left:34px;background:#3fc53f"></i>
  <div class="tab"><b>In</b> truenorth agency <span style="color:#999;margin-left:12px">×</span></div>
  <div class="a" style="left:8px;top:28px;font-size:11px;color:#555">← → C</div>
  <div class="addr">www.truenorthagency.net</div>
  <div class="a" style="left:1043px;top:28px;font-size:11px;color:#444">≡</div>
  <div class="bm" style="left:8px"><span style="color:#e44">⁞⁞</span> Apps &nbsp;&nbsp; <span style="color:#235">X</span> On Demand Sites &nbsp;&nbsp; <span style="color:#f80">►</span> TriNet Passport &nbsp;&nbsp; <span style="color:#38c">⊗</span> Nexonia</div>
 </div>
 <div class="app" style="width:1066px">
  <div class="sb"><div class="logo">evoq<sup>x</sup></div>
   <div class="si" style="top:85px"><svg width="32" height="32"><circle cx="16" cy="16" r="8" fill="none" stroke="#3a8bb0" stroke-width="2"/><path d="M16 16l3-5" stroke="#3a8bb0" stroke-width="2"/></svg></div>
   <div class="si" style="top:134px"><svg width="32" height="32"><path d="M10 10h12M10 14h12M10 18h12M10 22h8" stroke="#fff" stroke-width="2"/></svg></div>
   <div class="si" style="top:184px"><svg width="32" height="32"><path d="M10 10l12 12M22 10l-12 12" stroke="#3a8bb0" stroke-width="2"/></svg></div>
   <div class="si" style="top:234px"><svg width="32" height="32"><circle cx="16" cy="16" r="6" fill="none" stroke="#3a8bb0" stroke-width="4" stroke-dasharray="3 2"/></svg></div>
   <div class="av" style="left:15px;top:741px;width:30px;height:30px"></div>
  </div>
  <div class="hdr" style="height:74px"></div><div class="rhdr" style="height:74px;width:235px"></div><div class="rp" style="top:74px;width:235px"></div>
  <div class="t" style="left:84px;top:22px;font-size:22px;color:#111">T3150 Product Launch</div>
  <div class="t" style="left:88px;top:54px;font-size:8px;color:#333">‹ &nbsp; BACK TO ALL CAMPAIGNS</div>
  <div class="circ" style="left:893px;top:21px;color:#444;border-color:#666;font-family:'Liberation Serif',serif;font-style:italic">i</div>
  <div class="circ" style="left:934px;top:21px;color:#0a7fc4">✓</div>
  <div class="circ" style="left:975px;top:21px">∿</div>
  <div class="circ" style="left:1017px;top:21px">⋮</div>

  <div class="t" style="left:83px;top:92px;font-size:17px;color:#222">Publication Timeline : T3150 Product Launch</div>
  <div class="t" style="left:770px;top:94px;font-size:13px;color:#999">⑂</div>
  <div class="t" style="left:792px;top:92px;font-size:14px;color:#444">≣</div>
  <div class="t" style="left:83px;top:128px;font-size:8px">DEC 2016</div>
  <div class="days" style="left:67px;top:142px"><span style="width:37.9px">02</span><span style="width:37.9px">03</span><span style="width:37.9px">04</span><span style="width:37.9px">05</span><span style="width:37.9px">06</span><span style="width:37.9px">07</span><span style="width:37.9px">08</span><span style="width:37.9px">09</span><span style="width:37.9px">10</span><span style="width:37.9px">11</span><span style="width:37.9px">12</span><span style="width:37.9px">13</span><span style="width:37.9px">14</span><span style="width:37.9px">15</span><span style="width:37.9px">16</span><span style="width:37.9px">17</span><span style="width:37.9px">18</span><span style="width:37.9px">19</span><span style="width:37.9px">20</span><span style="width:37.9px">21</span></div>
  <div class="chart" style="left:87px;top:156px;width:721px;height:181px;background-image:repeating-linear-gradient(to right,#ececec 0 1px,transparent 1px 37.9px);background-position:-1px 0"></div>
  <svg class="a" style="left:0;top:0" width="1066" height="360" fill="#fff" stroke-width="2">
   <line x1="87" y1="160" x2="808" y2="160" stroke="#e8671c" stroke-width="2"/>
   <g stroke="#dcd84a"><line x1="87" y1="189" x2="806" y2="189" stroke-width="3"/><circle cx="87" cy="189" r="5"/><circle cx="806" cy="189" r="5"/></g>
   <g stroke="#1a7fc1"><line x1="87" y1="229" x2="808" y2="229" stroke-width="3"/><circle cx="277" cy="229" r="6"/><circle cx="504" cy="229" r="6"/><circle cx="808" cy="229" r="6"/></g>
   <g stroke="#f5a05a"><line x1="87" y1="273" x2="808" y2="273" stroke-width="3"/><circle cx="391" cy="273" r="5"/><circle cx="504" cy="273" r="5"/><circle cx="655" cy="273" r="5"/></g>
   <g stroke="#c08ad0"><line x1="87" y1="313" x2="806" y2="313" stroke-width="3"/><circle cx="108" cy="313" r="5"/><circle cx="163" cy="313" r="5"/><circle cx="239" cy="313" r="5"/><circle cx="314" cy="313" r="5"/><circle cx="390" cy="313" r="5"/><circle cx="465" cy="313" r="5"/><circle cx="541" cy="313" r="5"/><circle cx="616" cy="313" r="5"/><circle cx="693" cy="313" r="5"/><circle cx="769" cy="313" r="5"/><circle cx="806" cy="313" r="5"/></g>
  </svg>
  <div class="lbl" style="left:87px;top:172px">Website</div>
  <div class="lbl" style="left:87px;top:213px">Blog</div>
  <div class="lbl" style="left:87px;top:257px">Facebook</div>
  <div class="lbl" style="left:87px;top:297px">Twitter</div>

  <div class="t" style="left:88px;top:365px;font-size:17px;color:#222">Scheduled Content : T3150 Product Launch</div>
  <div class="row" style="left:86px;top:401px;width:720px;height:58px"><div class="th" style="background:linear-gradient(135deg,#2e4a50,#8fc4c8 40%,#d8ecec 55%,#3a5a5e)"></div><div class="rt">Webinar Landing Page</div><div class="rs">Webinar</div><i class="d1" style="left:348px"></i><i class="av" style="left:363px;top:18px;width:22px;height:22px"></i><div class="up">Updated Mar 14, 2016</div><div class="us">RMoore</div><i class="d1" style="left:504px"></i><i class="ck">✓</i><span class="ico">✎ ⟋ ⋯</span></div>

  <div class="ph" style="left:86px;top:474px;width:720px;border-color:#1a7fc1"><div class="th" style="background:#ebebeb;width:58px"></div><div class="rt">Placeholder</div><div class="rs">Blog</div><i class="d1" style="left:348px"></i><div class="lnk" style="left:394px;top:22px">[ ASSIGN OWNER ]</div><i class="d1" style="left:504px"></i><div class="lnk" style="right:11px;top:10px">[ SCHEDULE EXISTING BLOG ]</div></div>
  <div class="ph" style="left:86px;top:544px;width:720px"><div class="th" style="background:#ebebeb;width:58px"></div><div class="rt">Placeholder</div><div class="rs">Twitter</div><i class="d1" style="left:348px"></i><div class="lnk" style="left:394px;top:22px">[ ASSIGN OWNER ]</div><i class="d1" style="left:504px"></i><div class="lnk" style="right:11px;top:10px">[ SCHEDULTE EXISTING TWEET ]</div><div class="lnk" style="right:11px;top:24px">[ CREATE NEW TWEET ]</div></div>
  <div class="ph" style="left:86px;top:614px;width:720px"><div class="th" style="background:#ebebeb;width:58px"></div><div class="rt">Placeholder</div><div class="rs">Facebook</div><i class="d1" style="left:348px"></i><div class="lnk" style="left:394px;top:22px">[ ASSIGN OWNER ]</div><i class="d1" style="left:504px"></i><div class="lnk" style="right:11px;top:10px">[ SCHEDULE EXISTING FACEBOOK ]</div><div class="lnk" style="right:11px;top:24px">[ CREATE NEW POST ]</div></div>
  <div class="ph" style="left:86px;top:684px;width:720px"><div class="th" style="background:#ebebeb;width:58px"></div><div class="rt">Placeholder</div><div class="rs">LinkedIn</div><i class="d1" style="left:348px"></i><div class="lnk" style="left:394px;top:22px">[ ASSIGN OWNER ]</div><i class="d1" style="left:504px"></i><div class="lnk" style="right:11px;top:10px">[ SCHEDULE EXISTING LINKEDIN POST ]</div><div class="lnk" style="right:11px;top:24px">[ CREATE NEW LINKED IN ]</div></div>

  <div class="a" style="left:645px;top:518px;width:196px;height:47px;background:#fff;box-shadow:0 1px 5px rgba(0,0,0,.25)">
   <div class="a" style="left:0;top:0;width:48px;height:47px;background:linear-gradient(135deg,#151560,#2a2aa0 35%,#c01830 55%,#301020)"></div>
   <div class="t" style="left:66px;top:14px;font-size:10px;color:#111">Video GHZ</div>
   <div class="t" style="left:66px;top:29px;font-size:9px;color:#999">Blog</div>
  </div>

  <div class="t" style="left:851px;top:99px;font-size:8px;font-weight:bold">SEARCH PEOPLE</div>
  <div class="t" style="left:851px;top:114px;font-size:7px;line-height:10px">*Search people here.  If you would like to assign an<br>owner to a content item, drag and drop their card into<br>the placeholder space</div>
  <div class="inp" style="left:851px;top:158px;width:198px;height:24px;color:#aaa;font-size:8px">jane<span style="position:absolute;right:6px;top:4px;font-size:11px">⚲</span></div>
  <div class="card" style="left:851px;top:201px;width:198px;height:46px"><i class="av" style="left:16px;top:11px;width:24px;height:24px"></i><b style="left:55px;top:18px">Janet Smith</b></div>
  <div class="card" style="left:851px;top:260px;width:198px;height:46px"><i class="av" style="left:16px;top:11px;width:24px;height:24px"></i><b style="left:55px;top:18px">Jane Clark</b></div>
  <div class="t" style="left:851px;top:345px;font-size:8px;font-weight:bold">SEARCH BLOGS</div>
  <div class="t" style="left:851px;top:360px;font-size:7px;line-height:10px">*Search existing blogs here.  If you would like to use<br>an existing blog in this slot, drag and drop the card<br>in the placeholder space</div>
  <div class="inp" style="left:851px;top:403px;width:198px;height:24px;color:#aaa;font-size:8px">awe<span style="position:absolute;right:6px;top:4px;font-size:11px">⚲</span></div>
  <div class="card" style="left:851px;top:439px;width:198px;height:46px"><div class="th" style="width:48px;background:linear-gradient(160deg,#9a9a90,#333 40%,#777 70%,#444)"></div><b style="left:66px">Ecoview Product Release</b><i style="left:66px">Blog</i></div>
  <div class="card" style="left:851px;top:499px;width:198px;height:46px;opacity:.35"><div class="th" style="width:48px;background:linear-gradient(135deg,#151560,#2a2aa0 35%,#c01830 55%,#301020)"></div><b style="left:66px;font-weight:normal">Video GHZ</b><i style="left:66px">Blog</i></div>
  <div class="card" style="left:851px;top:559px;width:198px;height:46px"><div class="th" style="width:48px;background:linear-gradient(135deg,#2e4a50,#8fc4c8 40%,#d8ecec 55%,#3a5a5e)"></div><b style="left:66px">Teaching Sales to New...</b><i style="left:66px">Blog</i></div>
  <div class="card" style="left:851px;top:619px;width:198px;height:46px"><div class="th" style="width:48px;background:linear-gradient(135deg,#2a40c0,#9ab0f0 50%,#3050d0)"></div><b style="left:66px">How to Find the Right...</b><i style="left:66px">Blog</i></div>
 </div>
</div></div>

</body></html>
